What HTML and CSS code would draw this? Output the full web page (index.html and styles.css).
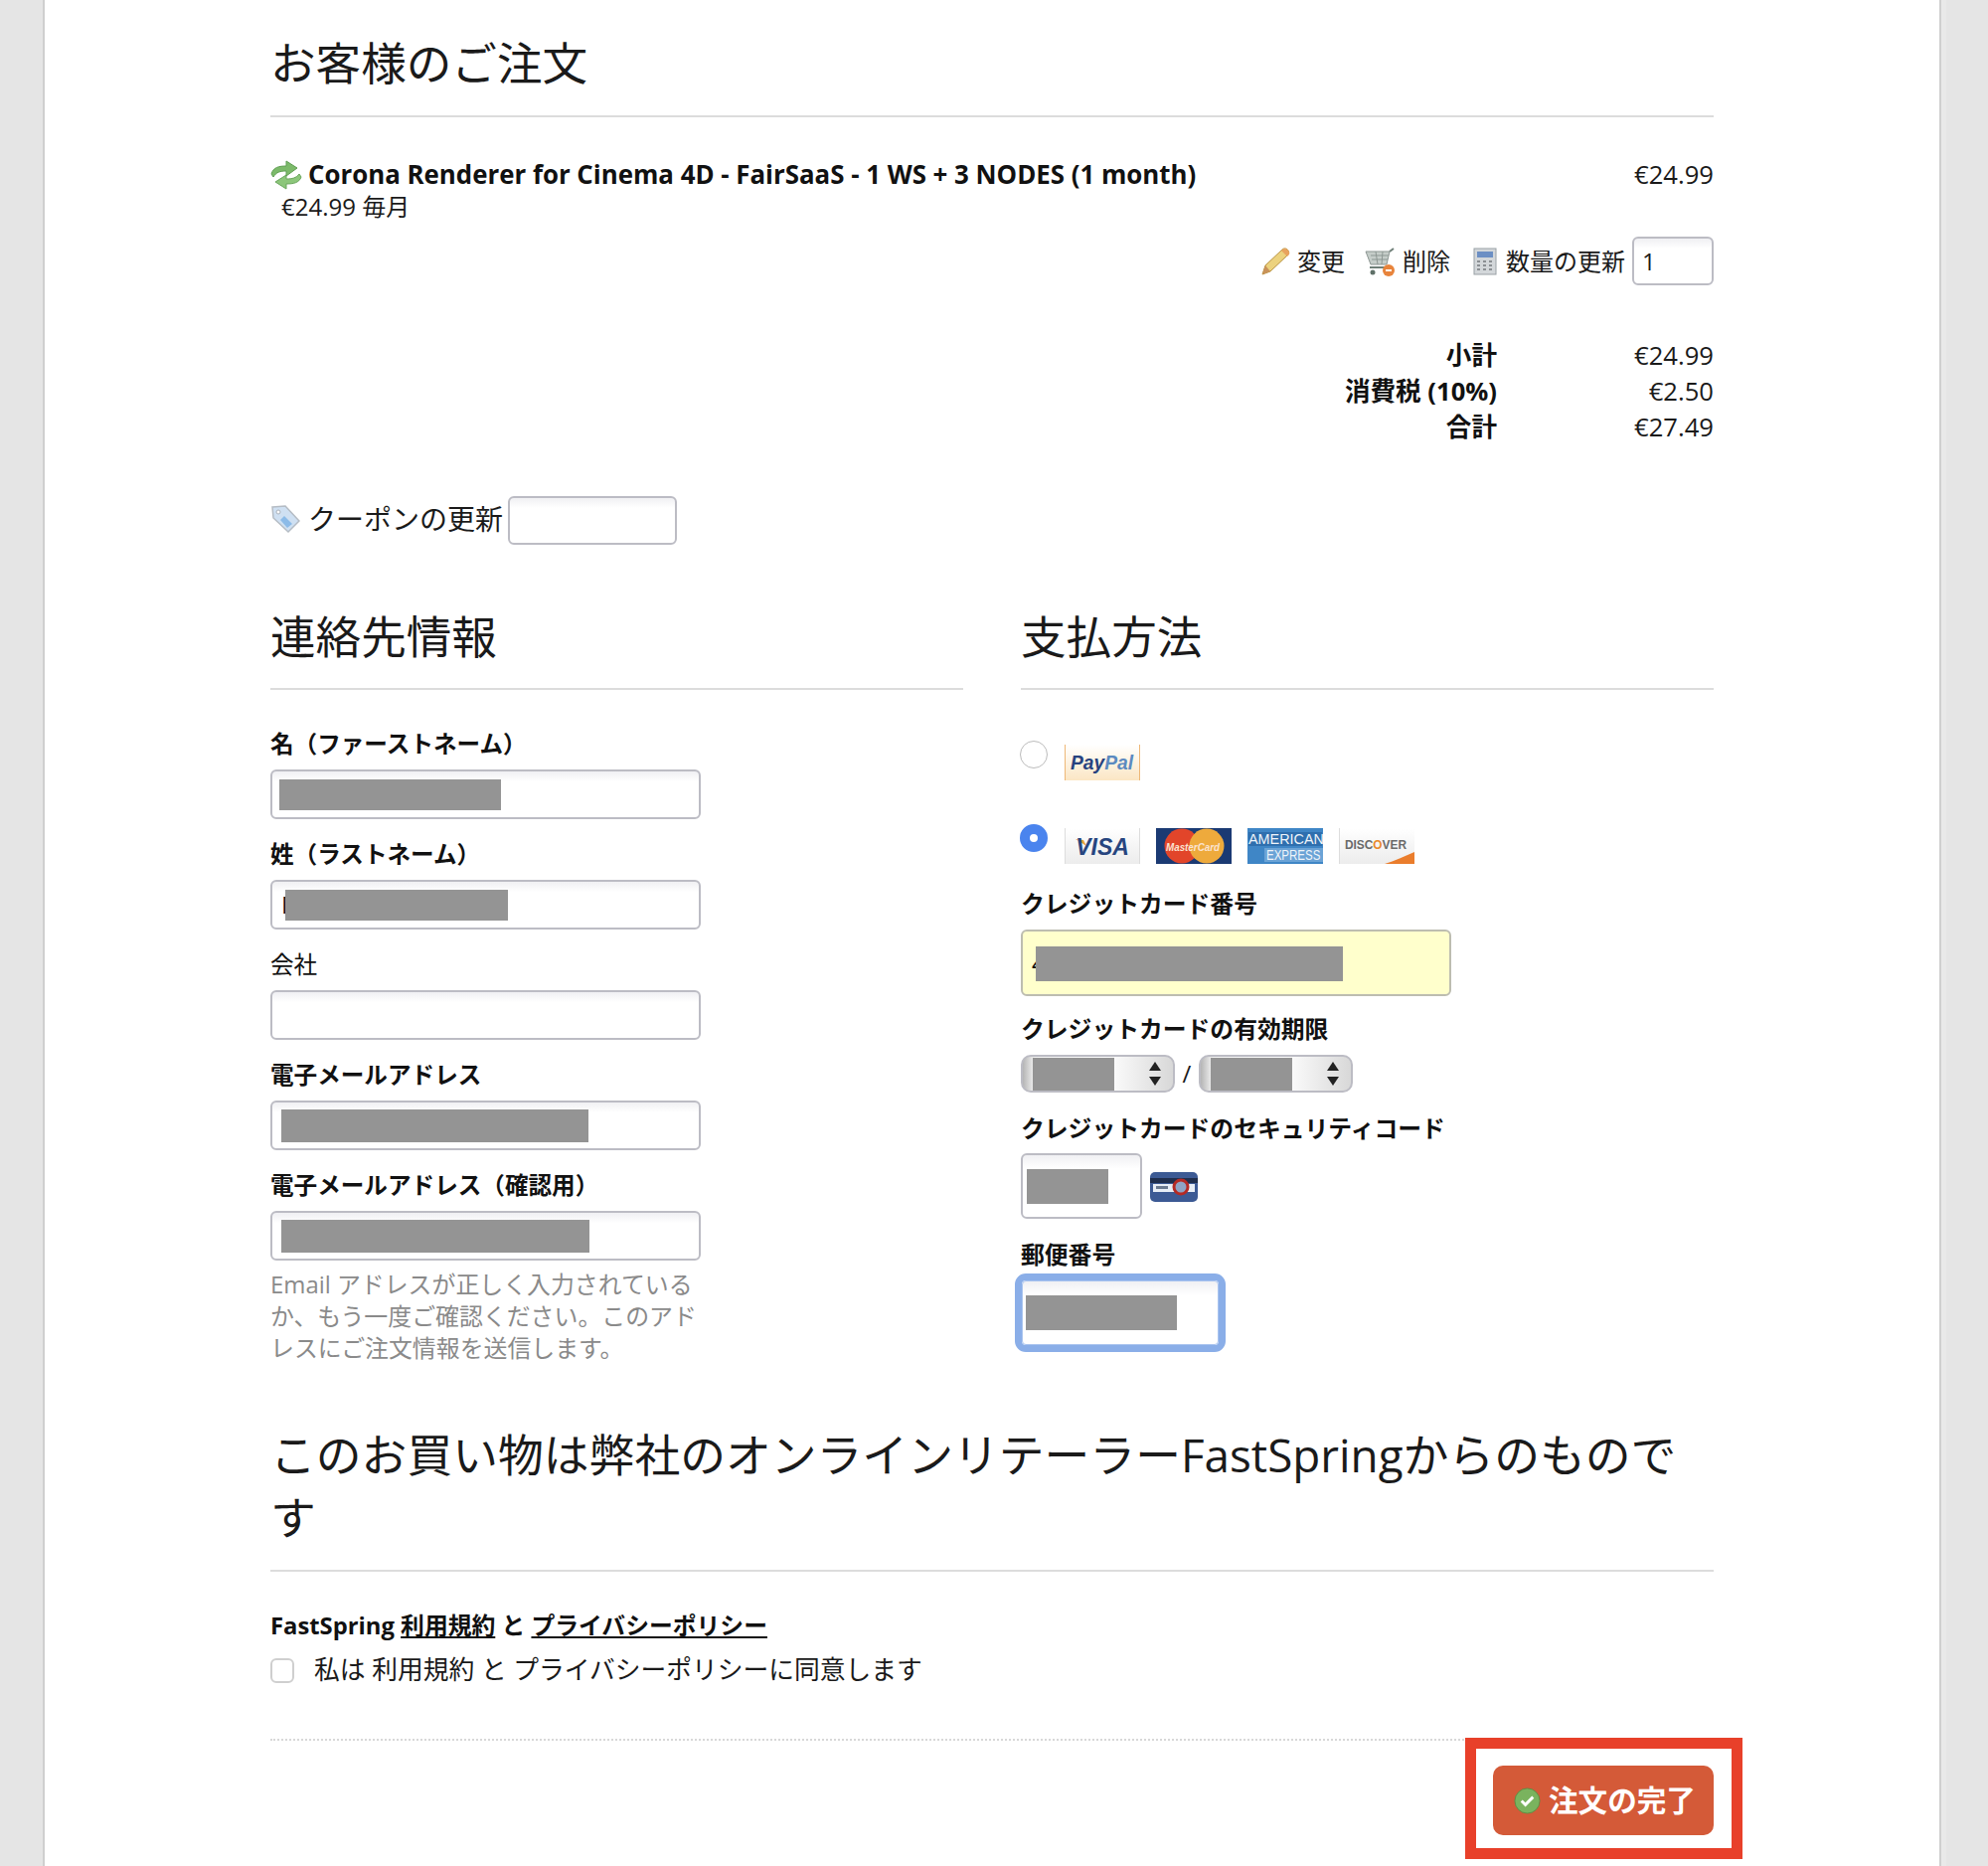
FILE: index.html
```html
<!DOCTYPE html>
<html lang="ja">
<head>
<meta charset="utf-8">
<title>お客様のご注文</title>
<link rel="stylesheet" href="styles.css">
</head>
<body>
<main class="page">
  <h1 class="heading heading-top">お客様のご注文</h1>

  <div class="item-row">
    <div class="item-name">
      <svg class="ico-refresh" viewBox="0 0 32 30"><path d="M31 17c-2 6-8 7-15 7v5L5 22l11-7v4c6 0 10-1 13-5z" fill="#8cc67a" stroke="#6aa65c"/><path d="M1 14C3 7 9 6 16 6V1l11 7-11 8v-5c-6 0-10 1-13 6z" fill="#7cba6a" stroke="#5f9e52"/></svg>
      <strong class="item-title">Corona Renderer for Cinema 4D - FairSaaS - 1 WS + 3 NODES (1 month)</strong>
    </div>
    <div>€24.99</div>
  </div>
  <div class="item-sub">€24.99 毎月</div>

  <div class="actions">
    <svg class="ico-action" viewBox="0 0 32 30"><path d="M2 28l3-9L22 3c2-2 5-1 6 1s1 3-1 5L10 25z" fill="#ecd27e" stroke="#b8923f"/><path d="M2 28l3-9 5 6z" fill="#c9925a"/><path d="M21 4l6 6 2-2c1-3-2-6-5-6z" fill="#e8a35e"/></svg>
    <span class="action-label">変更</span>
    <svg class="ico-action ico-cart" viewBox="0 0 32 30"><path d="M1 5h24l-3 13H6z" fill="#c5cdc9" stroke="#8d9793"/><path d="M6 9h18M7 13h16M11 5l2 13M18 5l-1 13" stroke="#8d9793" fill="none"/><path d="M5 21h17" stroke="#6f7f78" stroke-width="2"/><path d="M25 5l4-3" stroke="#6f7f78" stroke-width="2"/><circle cx="8" cy="26" r="2.5" fill="#5f7068"/><circle cx="24" cy="24" r="6" fill="#e8843c"/><path d="M21 24h6" stroke="#fff" stroke-width="2"/></svg>
    <span class="action-label action-del">削除</span>
    <svg class="ico-calc" viewBox="0 0 24 28"><rect x="1" y="1" width="22" height="26" fill="#d3d7da" stroke="#9aa1a6"/><rect x="4" y="4" width="16" height="6" fill="#6c8fc4"/><path d="M4 14h3M10 14h3M16 14h3M4 18h3M10 18h3M16 18h3M4 22h3M10 22h3M16 22h3" stroke="#8b8f93" stroke-width="2"/></svg>
    <span class="action-label action-qty">数量の更新</span>
    <div class="field field-qty">1</div>
  </div>

  <div class="totals">
    <strong>小計</strong><span>€24.99</span>
    <strong>消費税 (10%)</strong><span>€2.50</span>
    <strong>合計</strong><span>€27.49</span>
  </div>

  <div class="coupon">
    <svg class="ico-tag" viewBox="0 0 30 30"><path d="M2 3l13-1 14 15-11 11L3 14z" fill="#cfe0f2" stroke="#b5bcc4" stroke-width="1.5"/><circle cx="8" cy="8" r="2" fill="#fff" stroke="#a9b1ba"/><path d="M14 12l8 8-5 4-7-8z" fill="#8cbbe8"/></svg>
    <span class="coupon-label">クーポンの更新</span>
    <div class="field field-coupon"></div>
  </div>

  <div class="columns">
    <section>
      <h2 class="heading">連絡先情報</h2>
      <div class="contact-fields">
        <div class="form-row">
          <label class="label">名（ファーストネーム）</label>
          <div class="field field-contact"><span class="redact redact-first"></span></div>
        </div>
        <div class="form-row">
          <label class="label">姓（ラストネーム）</label>
          <div class="field field-contact"><span class="peek">M</span><span class="redact redact-last"></span></div>
        </div>
        <div class="form-row">
          <label class="label label-plain">会社</label>
          <div class="field field-contact"></div>
        </div>
        <div class="form-row">
          <label class="label">電子メールアドレス</label>
          <div class="field field-contact"><span class="redact redact-email"></span></div>
        </div>
        <div class="form-row form-row-last">
          <label class="label">電子メールアドレス（確認用）</label>
          <div class="field field-contact"><span class="redact redact-email2"></span></div>
        </div>
        <p class="help">Email アドレスが正しく入力されているか、もう一度ご確認ください。このアドレスにご注文情報を送信します。</p>
      </div>
    </section>

    <section class="payment">
      <h2 class="heading">支払方法</h2>
      <div class="pay-row pay-row-paypal">
        <span class="radio"></span>
        <svg class="logo" viewBox="0 0 76 36"><defs><linearGradient id="pp" x1="0" x2="0" y1="0" y2="1"><stop offset="0" stop-color="#fff"/><stop offset="1" stop-color="#fbe6c4"/></linearGradient></defs><rect width="76" height="36" fill="url(#pp)"/><path d="M.5 0v36M75.5 0v36" stroke="#eeb878"/><text x="6" y="25" textLength="63" lengthAdjust="spacingAndGlyphs" class="t-paypal"><tspan fill="#27427f">Pay</tspan><tspan fill="#5b8ac0">Pal</tspan></text></svg>
      </div>
      <div class="pay-row pay-row-cards">
        <span class="radio radio-on"></span>
        <div class="logos">
          <svg class="logo" viewBox="0 0 76 36"><defs><linearGradient id="vg" x1="0" x2="0" y1="0" y2="1"><stop offset="0" stop-color="#fff"/><stop offset="1" stop-color="#ececec"/></linearGradient></defs><rect width="76" height="36" fill="url(#vg)"/><path d="M.5 0v36M75.5 0v36" stroke="#ddd"/><path d="M11 11l8 1 3 6z" fill="#e8a33c"/><text x="38" y="27" text-anchor="middle" class="t-visa">VISA</text></svg>
          <svg class="logo" viewBox="0 0 76 36"><rect width="76" height="36" fill="#1b3a73"/><circle cx="26" cy="18" r="17.5" fill="#e2452a"/><circle cx="51" cy="18" r="17.5" fill="#eeaa3c"/><text x="10" y="23" textLength="54" lengthAdjust="spacingAndGlyphs" class="t-mc">MasterCard</text></svg>
          <svg class="logo" viewBox="0 0 76 36"><rect width="76" height="36" fill="#3f86c6"/><rect x="1" y="4" width="74" height="14" fill="#2f6fae"/><rect x="17" y="20" width="59" height="14" fill="#6ba3d6"/><text transform="translate(1 16) scale(.9 .92)" class="t-amex">AMERICAN</text><text transform="translate(19 32) scale(.72 .92)" class="t-amex">EXPRESS</text></svg>
          <svg class="logo" viewBox="0 0 76 36"><rect width="76" height="36" fill="url(#vg)"/><path d="M.5 0v36" stroke="#ddd"/><path d="M46 36c10-3 20-8 30-12v12z" fill="#ea7d2c"/><text x="6" y="21" textLength="62" lengthAdjust="spacingAndGlyphs" class="t-disc">DISC<tspan fill="#ea8a2c">O</tspan>VER</text></svg>
        </div>
      </div>

      <label class="label label-card">クレジットカード番号</label>
      <div class="field field-card"><span class="peek">4</span><span class="redact redact-card"></span></div>

      <label class="label label-exp">クレジットカードの有効期限</label>
      <div class="expiry">
        <div class="select"><span class="redact redact-month"></span><span class="arrows"></span></div>
        <span class="slash">/</span>
        <div class="select"><span class="redact redact-month"></span><span class="arrows"></span></div>
      </div>

      <label class="label label-cvv">クレジットカードのセキュリティコード</label>
      <div class="cvv-row">
        <div class="field field-cvv"><span class="redact redact-cvv"></span></div>
        <svg class="ico-cvv" viewBox="0 0 50 32"><rect x="1" y="1" width="48" height="30" rx="5" fill="#3c5a94"/><rect x="1" y="7" width="48" height="5" fill="#1f2e4d"/><rect x="4" y="13" width="42" height="8" fill="#e8eef6"/><rect x="7" y="15" width="12" height="3" fill="#6b7a90"/><circle cx="32" cy="16" r="7" fill="#8fa3c4" stroke="#b52a24" stroke-width="3"/></svg>
      </div>

      <label class="label label-zip">郵便番号</label>
      <div class="field field-zip"><span class="redact redact-zip"></span></div>
    </section>
  </div>

  <h2 class="heading heading-long">このお買い物は弊社のオンラインリテーラーFastSpringからのものです</h2>
  <div class="terms"><strong>FastSpring <u>利用規約</u> と <u>プライバシーポリシー</u></strong></div>
  <div class="agree"><span class="checkbox"></span><span>私は 利用規約 と プライバシーポリシーに同意します</span></div>
  <div class="divider"></div>

  <div class="submit-row">
    <div class="submit">
      <svg class="ico-check" viewBox="0 0 28 28"><circle cx="14" cy="14" r="13" fill="#7ab35e" stroke="#5d8f45"/><path d="M8 14l4 4 8-8" fill="none" stroke="#fff" stroke-width="3"/></svg>
      <span>注文の完了</span>
      <span class="highlight"></span>
    </div>
  </div>
</main>
</body>
</html>
```
FILE: styles.css
```css
* { box-sizing: border-box; }
html, body { margin: 0; height: 1877px; overflow: hidden; }
body {
  background: #e5e5e5;
  color: #1a1a1a;
  font-family: "Open Sans", "Noto Sans CJK JP", sans-serif;
  font-size: 25.6px;
  line-height: 36px;
}
.page {
  width: 1910px;
  height: 1877px;
  margin-left: 43px;
  padding: 0 227px;
  background: #fff;
  border-left: 2px solid #cfcfcf;
  border-right: 2px solid #cfcfcf;
  box-shadow: 5px 0 0 #e9e9e9;
}
.heading {
  margin: 0;
  padding: 0 0 19px;
  font-size: 45.6px;
  font-weight: 400;
  line-height: 66px;
  color: #1a1a1a;
  border-bottom: 2px solid #dcdcdc;
}
.heading-top { padding: 30px 0 20px; }
.heading-long { margin-top: 60px; padding-bottom: 21px; font-size: 45.8px; line-height: 63px; }

.item-row { display: flex; justify-content: space-between; margin-top: 40px; }
.item-name { display: flex; align-items: center; gap: 6px; color: #111; font-size: 25.85px; }
.item-title { margin-top: -2px; }
.ico-refresh { width: 32px; height: 30px; }
.item-sub { margin: -1px 0 0 11px; font-size: 24px; line-height: 30px; }

.actions { display: flex; align-items: center; justify-content: flex-end; height: 49px; margin-top: 15px; font-size: 24px; }
.ico-action { width: 32px; height: 30px; }
.ico-cart { margin-left: 20px; }
.ico-calc { width: 24px; height: 28px; margin-left: 23px; }
.action-label { margin-left: 5px; }
.action-del { margin-left: 6px; }
.action-qty { margin-left: 9px; margin-right: 7px; }

.field {
  display: flex;
  align-items: center;
  border: 2px solid #bcbcc4;
  border-radius: 6px;
  background: linear-gradient(#f0f0f3, #fff 22%);
}
.field-qty { width: 82px; height: 49px; padding-left: 8px; }

.totals {
  display: grid;
  grid-template-columns: auto 218px;
  justify-content: end;
  margin-top: 53px;
  text-align: right;
}
.totals strong { color: #111; }

.coupon { display: flex; align-items: center; margin-top: 51px; height: 49px; }
.ico-tag { width: 30px; height: 30px; margin-bottom: 4px; }
.coupon-label { margin: 0 5px 4px 8px; font-size: 28px; }
.field-coupon { width: 170px; height: 49px; }

.columns { display: grid; grid-template-columns: 697px 697px; column-gap: 58px; margin-top: 59px; }

.contact-fields { margin-top: 39px; }
.label { display: block; margin-bottom: 11px; font-size: 23.6px; font-weight: 700; line-height: 30px; color: #111; }
.payment .label { font-size: 23.8px; }
.label-plain { font-weight: 400; }
.form-row { margin-bottom: 20px; }
.form-row-last { margin-bottom: 0; }
.field-contact { position: relative; width: 433px; height: 50px; padding-left: 7px; }
.peek { padding-left: 2px; font-size: 24px; color: #111; }
.redact { display: block; background: #949494; flex: none; }
.redact-first { width: 223px; height: 31px; }
.redact-last { position: absolute; top: 8px; left: 13px; width: 224px; height: 31px; }
.redact-email { width: 309px; height: 33px; margin-left: 2px; }
.redact-email2 { width: 310px; height: 33px; margin-left: 2px; }
.help { width: 440px; margin: 8px 0 0; font-size: 23.9px; line-height: 32px; color: #8a8a8a; }

.pay-row { display: flex; align-items: flex-start; gap: 17px; }
.pay-row-paypal { margin-top: 55px; }
.pay-row-cards { margin-top: 48px; }
.radio {
  width: 28px;
  height: 28px;
  margin: -4px 0 0 -1px;
  flex: none;
  border: 1.5px solid #bcbcbc;
  border-radius: 50%;
  background: #fff;
}
.radio-on { border: 10px solid #4a84ee; }
.logo { display: block; width: 76px; height: 36px; }
.logos { display: flex; gap: 16px; }
.t-paypal { font: italic 700 21px "Liberation Sans", sans-serif; }
.t-visa { font: italic 700 23px "Liberation Sans", sans-serif; fill: #27457f; }
.t-mc { font: italic 700 11px "Liberation Sans", sans-serif; fill: #fbe3d0; }
.t-amex { font: 400 16px "Liberation Sans", sans-serif; fill: #eef4fa; }
.t-disc { font: 700 13px "Liberation Sans", sans-serif; fill: #6a6a6a; }

.label-card { margin-top: 25px; }
.field-card { position: relative; width: 433px; height: 67px; padding-left: 7px; background: #ffffcc; border-color: #bdbdb0; }
.redact-card { position: absolute; top: 15px; left: 13px; width: 309px; height: 35px; }
.payment .label-exp { margin-top: 18px; }
.expiry { display: flex; align-items: center; }
.select {
  display: flex;
  align-items: center;
  justify-content: space-between;
  width: 155px;
  height: 38px;
  padding: 0 12px 0 10px;
  border: 2px solid #bcbcc4;
  border-radius: 10px;
  background: linear-gradient(90deg, #b5b5b5, #f4f4f4 8%, #fff 55%, #d8d8d8);
}
.redact-month { width: 82px; height: 33px; }
.arrows { position: relative; width: 12px; height: 24px; }
.arrows::before, .arrows::after {
  content: "";
  position: absolute;
  left: 0;
  border-left: 6px solid transparent;
  border-right: 6px solid transparent;
}
.arrows::before { top: 0; border-bottom: 9px solid #222; }
.arrows::after { bottom: 0; border-top: 9px solid #222; }
.slash { width: 24px; text-align: center; font-size: 24px; }
.label-cvv { margin-top: 21px; margin-bottom: 10px; }
.cvv-row { display: flex; align-items: center; gap: 7px; }
.field-cvv { width: 122px; height: 66px; padding-left: 4px; }
.redact-cvv { width: 82px; height: 35px; }
.ico-cvv { width: 50px; height: 32px; margin-top: 2px; }
.payment .label-zip { margin-top: 21px; margin-bottom: 11px; }
.payment .label-cvv { margin-top: 21px; margin-bottom: 10px; }
.field-zip {
  width: 198px;
  height: 65px;
  margin-left: 1px;
  padding-left: 3px;
  border: 1px solid #a9c4ef;
  outline: 7px solid #8aaee8;
  outline-offset: 0;
  border-radius: 4px;
}
.redact-zip { width: 152px; height: 35px; }

.terms { margin-top: 36px; font-size: 23.8px; color: #111; }
.agree { display: flex; align-items: center; gap: 20px; margin-top: 8px; font-size: 25.75px; }
.checkbox { width: 24px; height: 25px; margin-top: 3px; border: 2px solid #cfcfcf; border-radius: 6px; background: #fff; }
.divider { margin-top: 52px; border-top: 2px dotted #d8d8d8; }

.submit-row { display: flex; justify-content: flex-end; margin-top: 25px; }
.submit {
  position: relative;
  display: flex;
  align-items: center;
  gap: 8px;
  width: 222px;
  height: 70px;
  padding-left: 21px;
  background: #d45a38;
  border-radius: 10px;
  color: #fff;
  font-size: 29.6px;
  font-weight: 700;
}
.ico-check { width: 27px; height: 27px; flex: none; }
.highlight {
  position: absolute;
  top: -28px;
  right: -29px;
  bottom: -24px;
  left: -28px;
  border: 11px solid #e8402a;
}
```
